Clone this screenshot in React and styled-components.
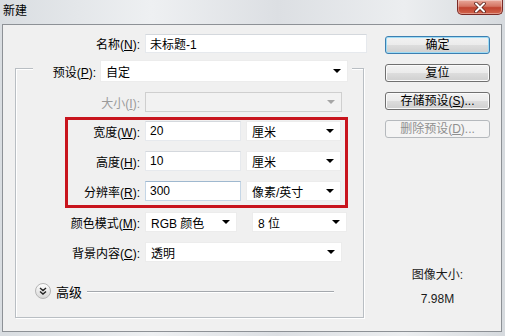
import styled, { createGlobalStyle } from "styled-components";

const GlobalStyle = createGlobalStyle`
  html, body {
    margin: 0;
    padding: 0;
    width: 505px;
    height: 336px;
    overflow: hidden;
    background: #cfd4d9;
  }
  body {
    font-family: "Liberation Sans", "Noto Sans CJK SC", sans-serif;
    font-size: 12px;
    color: #000;
  }
  * { box-sizing: border-box; }
`;

const Window = styled.div`
  width: 505px;
  height: 336px;
  display: flex;
  flex-direction: column;
  background: linear-gradient(90deg, #d9dde1 0%, #eef0f2 30%, #dcdfe3 55%, #eceef0 80%, #d6dade 100%);
`;

const TitleBar = styled.div`
  height: 24px;
  display: flex;
  justify-content: space-between;
  align-items: flex-start;
`;

const Title = styled.div`
  padding: 4px 0 0 3px;
  line-height: 14px;
`;

const CloseButton = styled.div`
  width: 46px;
  height: 15px;
  margin-right: 2px;
  border: 1px solid #7a2a26;
  border-top: none;
  border-radius: 0 0 5px 5px;
  background: linear-gradient(#e9a99b 0%, #d47563 45%, #c0432f 55%, #d2654d 100%);
  box-shadow: inset 0 0 0 1px rgba(255, 255, 255, 0.35);
  display: flex;
  align-items: center;
  justify-content: center;
`;

const Client = styled.div`
  flex: 1;
  margin: 0 3px 4px 2px;
  border: 1px solid #8d9196;
  background: #f0f0f0;
  display: flex;
`;

const FormColumn = styled.div`
  width: 364px;
  display: flex;
  flex-direction: column;
`;

const Row = styled.div`
  display: flex;
  align-items: center;
  gap: ${(p) => p.$gap ?? 5}px;
  margin-top: ${(p) => p.$mt ?? 0}px;
  height: ${(p) => p.$h ?? 20}px;
`;

const Label = styled.div`
  width: ${(p) => p.$w}px;
  text-align: right;
  white-space: nowrap;
  color: ${(p) => (p.$disabled ? "#9a9a9a" : "#000")};
  u { text-underline-offset: 1px; }
`;

const TextInput = styled.div`
  width: ${(p) => p.$w}px;
  height: ${(p) => p.$h ?? 20}px;
  background: #fff;
  border: 1px solid ${(p) => (p.$focus ? "#c5d6e6" : "#e6e9ed")};
  border-top-color: ${(p) => (p.$focus ? "#9fb8cf" : "#d4d8dd")};
  padding-left: 4px;
  display: flex;
  align-items: center;
`;

const Select = styled.div`
  width: ${(p) => p.$w}px;
  height: ${(p) => p.$h ?? 20}px;
  background: ${(p) => (p.$disabled ? "#f2f2f2" : "#fff")};
  border: 1px solid ${(p) => (p.$disabled ? "#cfcfcf" : "#ececec")};
  padding: 0 6px 0 5px;
  display: flex;
  align-items: center;
  justify-content: space-between;
`;

const Caret = styled.span`
  width: 0;
  height: 0;
  border-left: 4px solid transparent;
  border-right: 4px solid transparent;
  border-top: 4px solid ${(p) => (p.$disabled ? "#a6a6a6" : "#000")};
`;

const Group = styled.fieldset`
  margin: 1px 0 0 12px;
  width: 349px;
  padding: 0 0 18px 0;
  min-inline-size: 0;
  border: 1px solid #b9bec3;
  box-shadow: 1px 1px 0 #fff, inset 1px 1px 0 #fff;
`;

const Legend = styled.legend`
  margin-left: 17px;
  padding: 6px 4px 0 0;
  background: #f0f0f0;
`;

const Highlight = styled.div`
  margin: 5px 0 0 49px;
  width: 283px;
  border: 3px solid #c8141d;
  padding: 1px 0 4px;
  display: flex;
  flex-direction: column;
  gap: 10px;
`;

const Advanced = styled.div`
  margin: 21px 29px 0 19px;
  height: 16px;
  display: flex;
  align-items: center;
  gap: 5px;
  font-size: 13px;
  background-image: linear-gradient(#a4a8ad, #a4a8ad), linear-gradient(#ffffff, #ffffff);
  background-repeat: no-repeat;
  background-size: 247px 1px, 247px 1px;
  background-position: 52px 8px, 52px 9px;
`;

const SideColumn = styled.div`
  margin-left: 18px;
  width: 105px;
  padding-top: 11px;
  display: flex;
  flex-direction: column;
  gap: 10px;
`;

const Button = styled.div`
  height: 18px;
  border-radius: 3px;
  border: 1px solid ${(p) => (p.$default ? "#3c7fb1" : p.$disabled ? "#b5b9bd" : "#707070")};
  background: ${(p) =>
    p.$disabled
      ? "#f4f4f4"
      : "linear-gradient(#f2f2f2 0%, #ebebeb 50%, #dddddd 51%, #cfcfcf 100%)"};
  box-shadow: ${(p) =>
    p.$default ? "inset 0 0 0 1px #9fdcf5" : p.$disabled ? "none" : "inset 0 0 0 1px #fbfbfb"};
  color: ${(p) => (p.$disabled ? "#8f8f8f" : "#000")};
  display: flex;
  align-items: center;
  justify-content: center;
  line-height: 14px;
  u { text-underline-offset: 1px; }
`;

const ImageSize = styled.div`
  margin-top: 119px;
  text-align: center;
  line-height: 16px;
  display: flex;
  flex-direction: column;
  gap: 8px;
  color: #1a1a1a;
`;

const Field = ({ label, w, children, ...rest }) => (
  <Row {...rest}>
    <Label $w={w}>{label}</Label>
    {children}
  </Row>
);

const Drop = ({ w, h, text, disabled }) => (
  <Select $w={w} $h={h} $disabled={disabled}>
    <span>{text}</span>
    <Caret $disabled={disabled} />
  </Select>
);

const ExpandIcon = () => (
  <svg width="16" height="16" viewBox="0 0 16 16">
    <defs>
      <linearGradient id="adv" x1="0" y1="0" x2="0" y2="1">
        <stop offset="0" stopColor="#ffffff" />
        <stop offset="1" stopColor="#d6d6d6" />
      </linearGradient>
    </defs>
    <circle cx="8" cy="8" r="7.5" fill="url(#adv)" stroke="#b4b4b4" />
    <path d="M5 5 L8 7.5 L11 5 M5 8.5 L8 11 L11 8.5" fill="none" stroke="#222" strokeWidth="1.4" />
  </svg>
);

export default function App() {
  return (
    <>
      <GlobalStyle />
      <Window>
        <TitleBar>
          <Title>新建</Title>
          <CloseButton>
            <svg width="14" height="11" viewBox="0 0 14 11">
              <path d="M3 1.5 L11 9.5 M11 1.5 L3 9.5" stroke="#5a2019" strokeWidth="3.6" strokeLinecap="round" />
              <path d="M3 1.5 L11 9.5 M11 1.5 L3 9.5" stroke="#fff" strokeWidth="2" strokeLinecap="round" />
            </svg>
          </CloseButton>
        </TitleBar>
        <Client>
          <FormColumn>
            <Field $mt={9} $h={19} w={137} label={<>名称(<u>N</u>):</>}>
              <TextInput $w={222} $h={19}>未标题-1</TextInput>
            </Field>
            <Group>
              <Legend>
                <Field $gap={4} $h={22} w={63} label={<>预设(<u>P</u>):</>}>
                  <Drop w={248} h={22} text="自定" />
                </Field>
              </Legend>
              <Row $mt={10} $gap={5}>
                <Label $w={124} $disabled>大小(<u>I</u>):</Label>
                <Drop w={197} text="" disabled />
              </Row>
              <Highlight>
                <Field w={72} label={<>宽度(<u>W</u>):</>}>
                  <TextInput $w={96}>20</TextInput>
                  <Drop w={95} text="厘米" />
                </Field>
                <Field w={72} label={<>高度(<u>H</u>):</>}>
                  <TextInput $w={96}>10</TextInput>
                  <Drop w={95} text="厘米" />
                </Field>
                <Field w={72} label={<>分辨率(<u>R</u>):</>}>
                  <TextInput $w={96} $focus>300</TextInput>
                  <Drop w={95} text="像素/英寸" />
                </Field>
              </Highlight>
              <Field $mt={4} w={124} label={<>颜色模式(<u>M</u>):</>}>
                <Drop w={92} text="RGB 颜色" />
                <span style={{ width: 5 }} />
                <Drop w={95} text="8 位" />
              </Field>
              <Field $mt={10} w={124} label={<>背景内容(<u>C</u>):</>}>
                <Drop w={197} text="透明" />
              </Field>
              <Advanced>
                <ExpandIcon />
                <span>高级</span>
              </Advanced>
            </Group>
          </FormColumn>
          <SideColumn>
            <Button $default>确定</Button>
            <Button>复位</Button>
            <Button>存储预设(<u>S</u>)...</Button>
            <Button $disabled>删除预设(<u>D</u>)...</Button>
            <ImageSize>
              <span>图像大小:</span>
              <span>7.98M</span>
            </ImageSize>
          </SideColumn>
        </Client>
      </Window>
    </>
  );
}
